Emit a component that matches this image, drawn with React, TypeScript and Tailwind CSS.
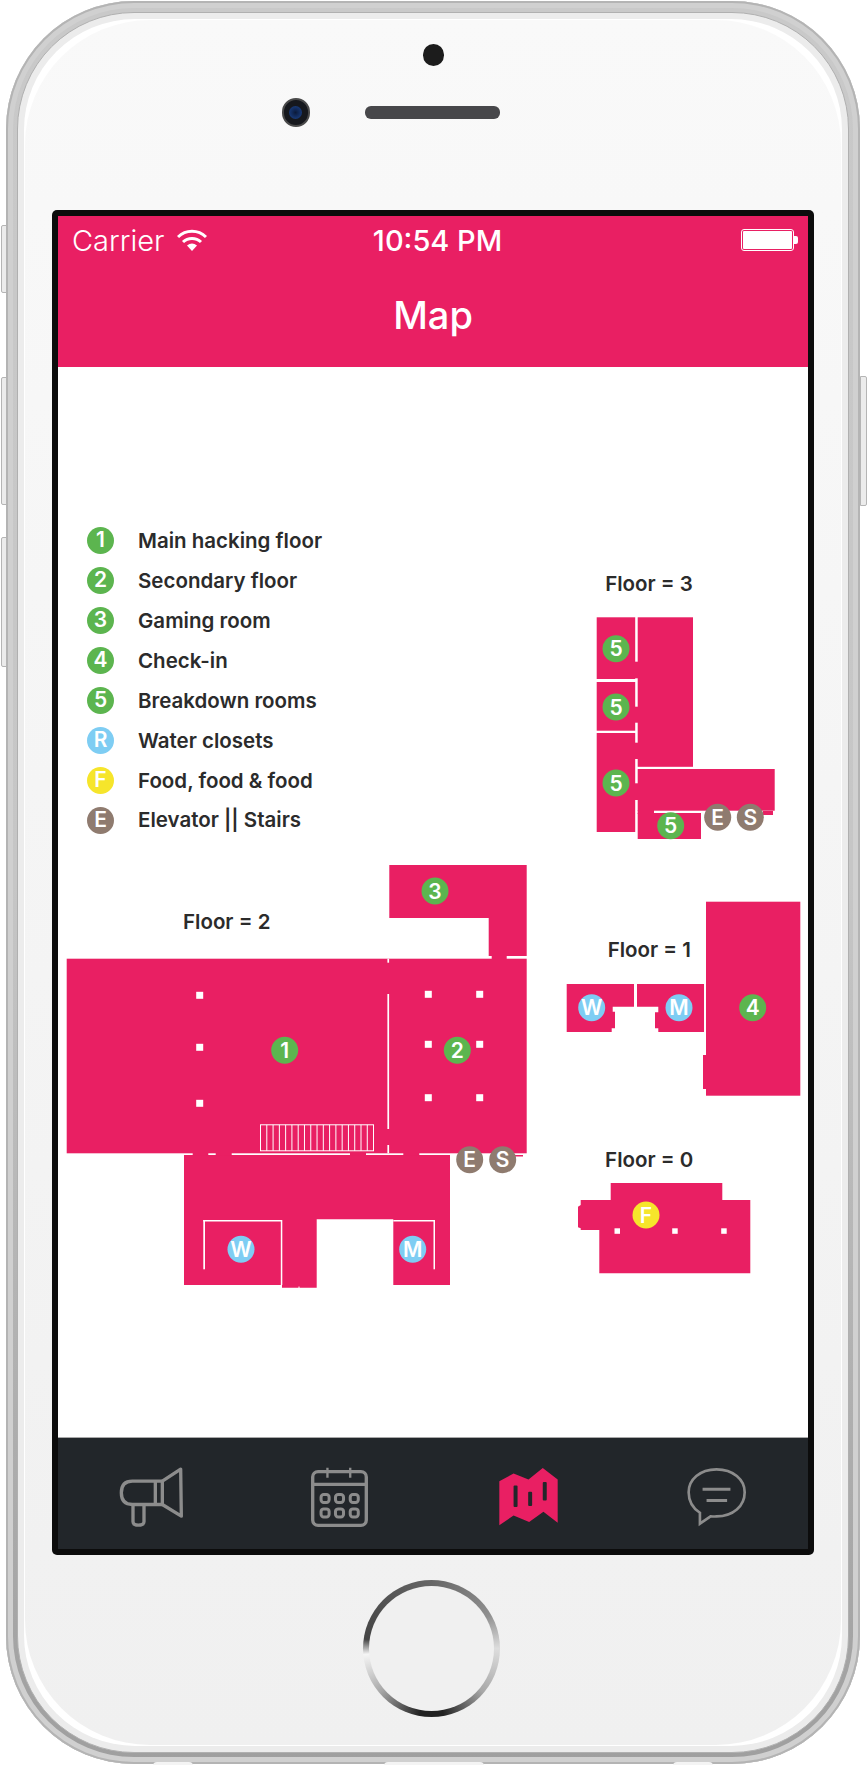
import React from 'react';

const PINK = '#e91f63';
const GREEN = '#5cb54f';
const BLUE = '#7ecdf3';
const YELLOW = '#f6e52b';
const BROWN = '#8f7b6f';

const legend = [
  { mark: '1', label: 'Main hacking floor', color: 'bg-[#5cb54f]' },
  { mark: '2', label: 'Secondary floor', color: 'bg-[#5cb54f]' },
  { mark: '3', label: 'Gaming room', color: 'bg-[#5cb54f]' },
  { mark: '4', label: 'Check-in', color: 'bg-[#5cb54f]' },
  { mark: '5', label: 'Breakdown rooms', color: 'bg-[#5cb54f]' },
  { mark: 'R', label: 'Water closets', color: 'bg-[#7ecdf3]' },
  { mark: 'F', label: 'Food, food & food', color: 'bg-[#f6e52b]' },
  { mark: 'E', label: 'Elevator || Stairs', color: 'bg-[#8f7b6f]' },
];

const badges: [number, number, string, string][] = [
  [616, 648.7, '5', GREEN],
  [616, 707, '5', GREEN],
  [616, 783, '5', GREEN],
  [670.7, 825.7, '5', GREEN],
  [717.7, 817.3, 'E', BROWN],
  [750.3, 817.3, 'S', BROWN],
  [435, 891, '3', GREEN],
  [284.7, 1050.3, '1', GREEN],
  [457.3, 1050.3, '2', GREEN],
  [469.7, 1159.7, 'E', BROWN],
  [502.7, 1159.7, 'S', BROWN],
  [241, 1249.3, 'W', BLUE],
  [412.7, 1249.3, 'M', BLUE],
  [591.7, 1007.7, 'W', BLUE],
  [679, 1007.7, 'M', BLUE],
  [752.7, 1007.7, '4', GREEN],
  [646, 1215, 'F', YELLOW],
];

const floorLabels: [number, number, string][] = [
  [649, 590.7, 'Floor = 3'],
  [226.7, 928.7, 'Floor = 2'],
  [649.3, 957.3, 'Floor = 1'],
  [649.2, 1166.7, 'Floor = 0'],
];

const pillars: [number, number][] = [
  [199.7, 995.3],
  [199.7, 1047.3],
  [199.7, 1103.3],
  [428.3, 994.3],
  [479.7, 994.3],
  [428.3, 1044.3],
  [479.7, 1044.3],
  [428.3, 1097.7],
  [479.7, 1097.7],
];

function FloorMap() {
  return (
    <svg viewBox="58 367 750 1071" className="absolute inset-0 w-[750px] h-[1071px]">
      {/* floor 3 */}
      <g fill={PINK}>
        <rect x="596.7" y="617.3" width="38.5" height="61.7" />
        <rect x="596.7" y="682" width="38.5" height="48.7" />
        <rect x="596.7" y="733" width="38.5" height="99" />
        <rect x="637.7" y="617.3" width="55.3" height="149.5" />
        <rect x="637.7" y="769" width="137" height="41.7" />
        <rect x="637.7" y="813" width="63.3" height="26" />
        <rect x="635" y="661.7" width="3" height="16.6" />
        <rect x="635" y="706.7" width="3" height="16" />
        <rect x="635" y="742.7" width="3" height="16.3" />
        <rect x="635" y="783.3" width="3" height="16.7" />
        <rect x="637.7" y="810" width="16.3" height="4" />
        <rect x="763" y="811" width="10" height="4" />
      </g>

      {/* floor 2 */}
      <g fill={PINK}>
        <polygon points="389.3,865 526.7,865 526.7,956 488.7,956 488.7,918 389.3,918" />
        <rect x="66.7" y="958.7" width="460" height="194.6" />
        <rect x="491.7" y="955" width="15" height="4" />
        <polygon points="184,1155 450,1155 450,1285 393.3,1285 393.3,1219.3 316.7,1219.3 316.7,1287.7 299.5,1287.7 299.5,1286.5 298.5,1286.5 298.5,1287.7 282,1287.7 282,1285 184,1285" />
        <rect x="192.7" y="1153" width="15.6" height="2.5" />
        <rect x="215.7" y="1153" width="16" height="2.5" />
        <rect x="350" y="1153" width="16" height="2.5" />
        <rect x="403.3" y="1153" width="16" height="2.5" />
        <rect x="515" y="1155" width="8" height="1.5" />
      </g>
      <g fill="#ffffff">
        <rect x="387.4" y="958.7" width="1.7" height="4" />
        <rect x="387.4" y="994" width="1.7" height="135" />
        <rect x="387.4" y="1145" width="1.7" height="8.3" />
        {pillars.map(([x, y]) => (
          <rect key={`${x}-${y}`} x={x - 3.5} y={y - 3.5} width="7" height="7" />
        ))}
        <rect x="203.3" y="1220" width="78.7" height="1.5" />
        <rect x="203.3" y="1220" width="1.7" height="49.3" />
        <rect x="280.8" y="1220" width="1.5" height="65" />
        <rect x="393.3" y="1220" width="41.7" height="1.5" />
        <rect x="433.5" y="1220" width="1.5" height="49.3" />
      </g>
      <g fill="none" stroke="#ffffff" strokeWidth="1">
        <rect x="260.5" y="1124.8" width="113" height="26" />
        {Array.from({ length: 17 }, (_, i) => (
          <line key={i} x1={266.8 + i * 6.28} y1="1124.8" x2={266.8 + i * 6.28} y2="1150.8" />
        ))}
      </g>

      {/* floor 1 */}
      <g fill={PINK}>
        <polygon points="566.7,984 634,984 634,1006.7 612.7,1006.7 612.7,1011.7 615,1011.7 615,1028.3 611.7,1028.3 611.7,1032 566.7,1032" />
        <polygon points="637,984 704,984 704,1032 658.3,1032 658.3,1028.3 655,1028.3 655,1012.3 658.3,1012.3 658.3,1006.7 637,1006.7" />
        <rect x="706" y="901.7" width="94.3" height="194" />
        <rect x="703" y="1055" width="3" height="34" />
      </g>

      {/* floor 0 */}
      <polygon
        fill={PINK}
        points="610.7,1183 722.3,1183 722.3,1200 750.3,1200 750.3,1273.3 599.3,1273.3 599.3,1230 580.7,1230 580.7,1228.3 578,1227.3 578,1206.7 580.7,1205 580.7,1200 610.7,1200"
      />
      <g fill="#ffffff">
        <rect x="614.5" y="1228.3" width="5.5" height="5.5" />
        <rect x="672.2" y="1228.3" width="5.5" height="5.5" />
        <rect x="721.2" y="1228.3" width="5.5" height="5.5" />
      </g>

      {floorLabels.map(([x, y, text]) => (
        <text key={text} x={x} y={y} textAnchor="middle" fill="#2b2b2b" fontSize="20.5" fontWeight="600">
          {text}
        </text>
      ))}

      {badges.map(([x, y, text, color]) => (
        <g key={`${x}-${y}`}>
          <circle cx={x} cy={y} r="13.5" fill={color} />
          <text x={x} y={y + 7.5} textAnchor="middle" fill="#ffffff" fontSize="21" fontWeight="600">
            {text}
          </text>
        </g>
      ))}
    </svg>
  );
}

function Wifi() {
  return (
    <svg viewBox="0 0 30 22" className="w-[30px] h-[22px]" fill="none" stroke="#ffffff" strokeWidth="3">
      <path d="M1,8 A20,20 0 0 1 29,8" />
      <path d="M6,13 A13,13 0 0 1 24,13" />
      <path d="M10,16.5 A8,8 0 0 1 20,16.5 L15,22 Z" fill="#ffffff" stroke="none" />
    </svg>
  );
}

function Megaphone() {
  return (
    <svg viewBox="55 35 195 185" className="w-[65px] h-[62px]" fill="none" stroke="#8c8c8c" strokeWidth="10" strokeLinejoin="round">
      <path d="M185,80 L95,80 Q62,80 62,115 Q62,150 95,150 L185,150 Z" />
      <path d="M164,80 L164,150" />
      <path d="M185,80 L240,44 L242,185 L185,150" />
      <path d="M97,150 L97,202 Q97,212 113,212 Q130,212 130,202 L130,150" />
    </svg>
  );
}

function CalendarIcon() {
  const cells = [675, 718, 762];
  return (
    <svg viewBox="630 35 176 185" className="w-[59px] h-[62px]" fill="none" stroke="#8c8c8c" strokeWidth="10">
      <rect x="638" y="52" width="160" height="160" rx="16" />
      <path d="M638,90 L798,90" />
      <path d="M682,40 L682,70 M750,40 L750,70" strokeWidth="7" />
      {cells.map((x) => (
        <React.Fragment key={x}>
          <rect x={x - 12} y="120" width="24" height="24" rx="8" strokeWidth="9" />
          <rect x={x - 12} y="163" width="24" height="24" rx="8" strokeWidth="9" />
        </React.Fragment>
      ))}
    </svg>
  );
}

function MapIcon() {
  return (
    <svg viewBox="50 35 190 185" className="w-[63px] h-[62px]">
      <polygon fill={PINK} points="57,80 100,57 145,75 188,40 233,75 233,205 190,172 147,203 100,183 57,213" />
      <g fill="#22262a">
        <rect x="100" y="93" width="12" height="65" rx="3" />
        <rect x="144" y="112" width="12" height="43" rx="3" />
        <rect x="188" y="82" width="12" height="56" rx="3" />
      </g>
    </svg>
  );
}

function ChatIcon() {
  return (
    <svg viewBox="615 35 190 185" className="w-[63px] h-[62px]" fill="none" stroke="#8c8c8c" strokeWidth="8">
      <path d="M710,44 C660,44 626,75 626,113 C626,140 640,162 660,175 L660,208 L692,186 C700,187 705,186 710,186 C760,186 795,155 795,113 C795,75 760,44 710,44 Z" />
      <path d="M668,104 L752,104 M680,138 L742,138" strokeWidth="9" />
    </svg>
  );
}

export default function App() {
  return (
    <div className="relative w-[867px] h-[1765px] bg-white overflow-hidden font-['Inter','Liberation_Sans',sans-serif]">
      {/* side buttons */}
      <div className="absolute left-[1px] top-[225px] w-[6px] h-[68px] rounded-l-[2px] border border-[#b5b5b5] bg-[#ececec]" />
      <div className="absolute left-[1px] top-[377px] w-[7px] h-[128px] rounded-l-[2px] border border-[#b5b5b5] bg-[#ececec]" />
      <div className="absolute left-[1px] top-[537px] w-[7px] h-[130px] rounded-l-[2px] border border-[#b5b5b5] bg-[#ececec]" />
      <div className="absolute right-[0px] top-[376px] w-[7px] h-[130px] rounded-r-[2px] border border-[#b5b5b5] bg-[#ececec]" />

      {/* phone body */}
      <div className="relative ml-[6px] mt-[1px] w-[854px] h-[1763px] rounded-[128px] p-[11px] bg-gradient-to-b from-[#c9c9c9] via-[#c6c6c6] to-[#9f9f9f] shadow-[inset_0_0_0_2px_#b4b4b4,inset_0_0_0_7px_#d0d0d0]">
        <div className="h-full rounded-[117px] p-[6px] bg-[#ececec] border border-[#b0b0b0]">
          <div className="h-full rounded-[111px] p-[1px] bg-white">
            <div className="h-full rounded-[125px] flex flex-col items-center bg-gradient-to-b from-[#f9f9f9] to-[#f0f0f0]">
              {/* sensor */}
              <div className="mt-[24px] w-[21px] h-[22px] rounded-full bg-[#1c1c1c]" />

              {/* camera and speaker */}
              <div className="mt-[32px] mr-[84px] w-[218px] h-[29px] flex items-center gap-[55px]">
                <div className="w-[28px] h-[29px] rounded-full bg-[#16181d] border-2 border-[#4a4a4a] flex items-center justify-center">
                  <div className="w-[13px] h-[13px] rounded-full bg-[radial-gradient(circle,#0b1a3a,#1d4690)]" />
                </div>
                <div className="w-[136px] h-[13px] rounded-[6px] bg-[#47474a]" />
              </div>

              {/* screen */}
              <div className="mt-[83px] w-[762px] h-[1345px] rounded-[5px] bg-[#0c0c0c] p-[6px] flex flex-col">
                <div className="h-[151px] bg-[#e91f63] text-white flex flex-col">
                  <div className="grid grid-cols-[1fr_auto_1fr] items-center pl-[14px] pr-[10px] pt-[2px] h-[46px]">
                    <div className="flex items-center gap-[13px]">
                      <span className="text-[29px] font-light leading-none">Carrier</span>
                      <Wifi />
                    </div>
                    <span className="ml-[5px] text-[29px] font-medium leading-none">10:54 PM</span>
                    <div className="flex items-center justify-end">
                      <div className="w-[53px] h-[22px] rounded-[3px] border border-white p-[1px]">
                        <div className="h-full rounded-[1px] bg-white" />
                      </div>
                      <div className="w-[4px] h-[8px] rounded-r-[2px] bg-white" />
                    </div>
                  </div>
                  <div className="flex-1 flex items-center justify-center pt-[1px]">
                    <h1 className="text-[38px] font-medium leading-none">Map</h1>
                  </div>
                </div>

                <div className="relative h-[1070px] bg-white pl-[29px] pt-[153px]">
                  <FloorMap />
                  <ul className="relative flex flex-col">
                    {legend.map((item) => (
                      <li key={item.label} className="group h-[40px] flex items-center gap-[24px]">
                        <span className={`w-[27px] h-[27px] rounded-full flex items-center justify-center text-white text-[21px] font-semibold ${item.color}`}>
                          {item.mark}
                        </span>
                        <span className="pt-[3px] group-last:pt-0 text-[#2b2b2b] text-[20.5px] font-semibold">{item.label}</span>
                      </li>
                    ))}
                  </ul>
                </div>

                <nav className="h-[112px] bg-[#22262a] border-t border-[#a9a9a9] grid grid-cols-4 items-center pt-[7px]">
                  <div className="flex justify-center"><Megaphone /></div>
                  <div className="flex justify-center"><CalendarIcon /></div>
                  <div className="flex justify-center pl-[3px]"><MapIcon /></div>
                  <div className="flex justify-center pl-[5px]"><ChatIcon /></div>
                </nav>
              </div>

              {/* home button */}
              <div className="mt-[25px] mr-[3px] w-[137px] h-[137px] rounded-full p-[6px] bg-[conic-gradient(#666666,#8f8f8f_60deg,#dddddd_90deg,#a8a8a8_130deg,#222222_170deg,#222222_190deg,#a8a8a8_230deg,#f5f5f5_265deg,#444444_278deg,#555555_320deg,#666666)]">
                <div className="w-full h-full rounded-full bg-[#f0f0f0]" />
              </div>
            </div>
          </div>
        </div>

        {/* bottom edge cut-outs */}
        <div className="absolute top-[1761px] left-[147px] w-[40px] h-[4px] rounded-t-full bg-[#f4f4f4]" />
        <div className="absolute top-[1761px] left-[378px] w-[100px] h-[4px] rounded-t-full bg-[#f4f4f4]" />
        <div className="absolute top-[1761px] left-[667px] w-[40px] h-[4px] rounded-t-full bg-[#f4f4f4]" />
      </div>
    </div>
  );
}
